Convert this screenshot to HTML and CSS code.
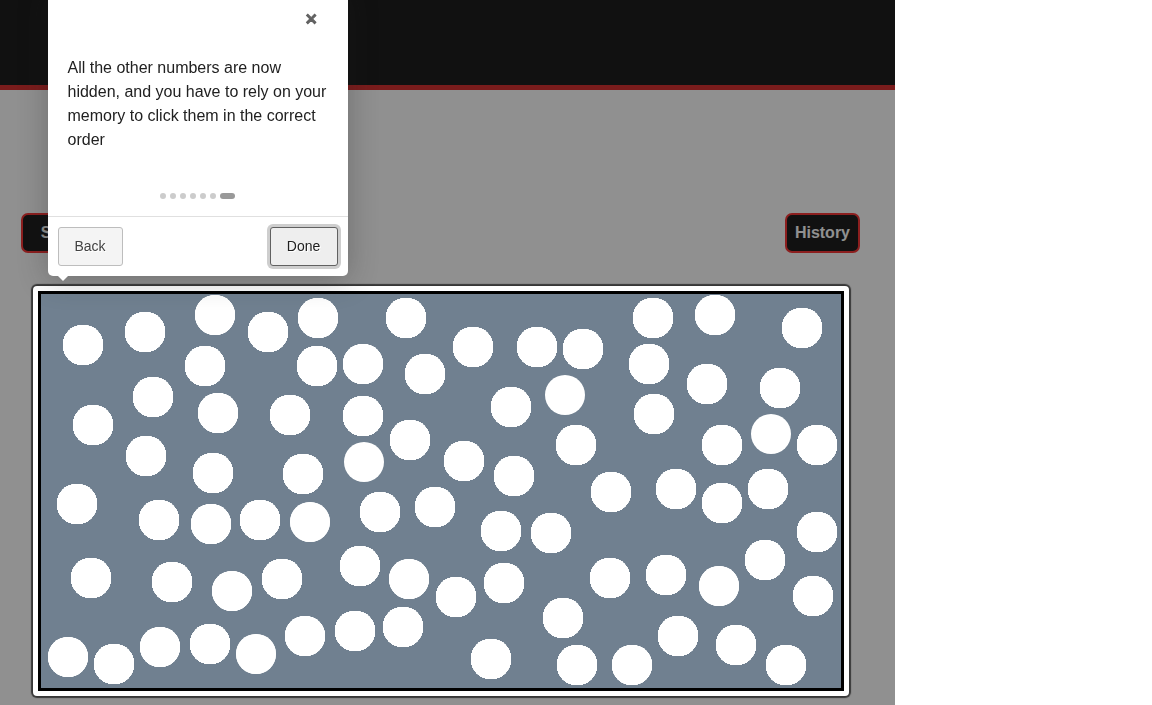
FILE: index.html
```
<!DOCTYPE html>
<html lang="en">
<head>
<meta charset="utf-8">
<title>Memory game</title>
<link rel="stylesheet" href="styles.css">
</head>
<body>
<div class="page">
  <header class="header"></header>
  <main class="main">
    <div class="toolbar">
      <button class="btn btn-start">Start</button>
      <button class="btn">History</button>
    </div>
    <div class="board"><canvas id="game" class="canvas" width="800" height="394"></canvas></div>
  </main>
  <section class="tooltip">
    <div class="tooltip-head"><a class="close">×</a></div>
    <p class="tooltip-text">All the other numbers are now hidden, and you have to rely on your memory to click them in the correct order</p>
    <div class="bullets"><i></i><i></i><i></i><i></i><i></i><i></i><i class="active"></i></div>
    <div class="tooltip-foot">
      <a class="tip-btn">Back</a>
      <a class="tip-btn done">Done</a>
    </div>
    <span class="arrow"></span>
  </section>
</div>
<script src="game.js"></script>
</body>
</html>
```
FILE: styles.css
```
* { box-sizing: border-box; }
body { margin: 0; background: #fff; font-family: "Liberation Sans", Arial, sans-serif; overflow: hidden; }
.page { position: relative; width: 895px; height: 705px; overflow: hidden; background: #fff; }
.header { height: 90px; background: #010101; border-bottom: 5px solid #d31717; }
.main { padding: 123px 35px 0 21px; }
.toolbar { display: flex; justify-content: space-between; }
.btn {
  height: 40px; padding: 0 8px; border: 2px solid #f61d1d; border-radius: 7px;
  background: #010101; color: #fff; font: bold 16px/34px "Liberation Sans", Arial, sans-serif;
}
.btn-start { width: 76px; }
.board {
  position: relative; width: 816px; height: 410px; margin: 33px 0 0 12px; padding: 5px;
  background: #fff; border-radius: 4px;
  box-shadow: 0 0 1px 2px rgba(33, 33, 33, .8), 0 0 0 5000px rgba(33, 33, 33, .5);
}
.canvas { display: block; box-sizing: content-box; border: 3px solid #000; background: #708090; }
.tooltip {
  position: absolute; left: 48px; top: -10px; width: 300px; height: 286px; padding-top: 10px;
  display: flex; flex-direction: column; background: #fff; border-radius: 5px;
  box-shadow: 0 3px 30px rgba(33, 33, 33, .3);
}
.tooltip-head { height: 56px; padding: 8px 30px 0 0; text-align: right; }
.close {
  color: #616161; font: bold 16px/22px "DejaVu Sans", sans-serif;
  -webkit-text-stroke: 1px #616161;
}
.tooltip-text { margin: 0; padding: 0 20px 0 19.5px; height: 137px; font-size: 16px; line-height: 24px; color: #212121; }
.bullets { display: flex; justify-content: center; gap: 4px; height: 23px; padding-right: 1px; }
.bullets i { width: 6px; height: 6px; border-radius: 10px; background: #ccc; }
.bullets .active { width: 15px; background: #999; }
.tooltip-foot { display: flex; justify-content: space-between; padding: 10px; border-top: 1px solid #e0e0e0; }
.tip-btn {
  width: 65px; height: 39px; padding-right: 1px; border: 1px solid #bdbdbd; border-radius: 3px; background: #f4f4f4;
  color: #424242; font-size: 14px; line-height: 37px; text-align: center; text-shadow: 1px 1px 0 #fff;
}
.done { width: 68px; background: #eee; border-color: #616161; color: #212121; box-shadow: 0 0 0 3px rgba(158, 158, 158, .5); }
.arrow { position: absolute; left: 10px; top: 286px; border: 5px solid transparent; border-top-color: #fff; border-bottom: 0; }
```
FILE: game.js
```
// x, y of each hidden number; optional third value is how often it has been painted
const circles = [
  [42,51],[104,38],[174,21,4],[227,38],[277,24,7],[365,24],[164,72],[276,72],[322,70,9],[384,80],
  [112,103],[177,119,9],[249,121],[322,122],[52,131],[369,146],[105,162],[172,179],[262,180],[323,168,1],
  [432,53],[496,53],[542,55],[612,24],[674,21,9],[761,34],[608,70],[666,90],[739,94],[470,113],
  [524,101,1],[613,120],[535,151],[681,151],[730,140,1],[776,151],[423,167],[473,182],[570,198],[635,195],
  [681,209],[727,195],[460,237],[510,239],[776,238],[724,266],[415,303],[463,289],[569,284],[625,281],
  [678,292,3],[772,302],[522,324],[637,342],[695,351],[450,365],[536,371],[591,371,9],[745,371],
  [36,210],[118,226],[170,230,8],[219,226],[269,228,2],[339,218],[394,213],[50,284],[131,288],
  [191,297,4],[241,285],[319,272],[368,285,4],[27,363,4],[73,370],[119,353,6],[169,350],[215,360,2],
  [264,342,8],[314,337],[362,333]
];
const ctx = document.getElementById('game').getContext('2d');
ctx.fillStyle = '#fff';
for (const [x, y, paints = 25] of circles) {
  for (let i = 0; i < paints; i++) {
    ctx.beginPath();
    ctx.arc(x, y, 20, 0, Math.PI * 2);
    ctx.fill();
  }
}
```
